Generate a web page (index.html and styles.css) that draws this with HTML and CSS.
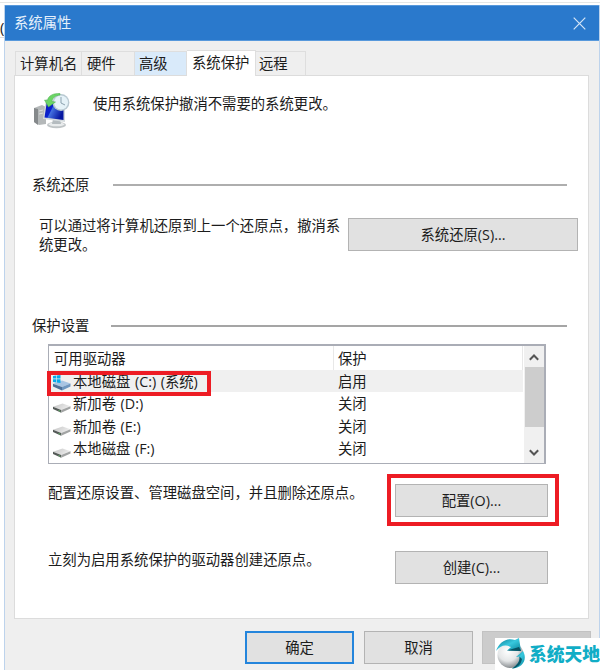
FILE: index.html
```html
<!DOCTYPE html>
<html lang="zh-CN">
<head>
<meta charset="utf-8">
<title>系统属性</title>
<link rel="stylesheet" href="styles.css">
</head>
<body>
<svg width="0" height="0" class="defs" aria-hidden="true">
  <defs>
    <linearGradient id="gray" x1="0" y1="0" x2="1" y2="0.4"><stop offset="0" stop-color="#c4c4c4"/><stop offset="1" stop-color="#ececec"/></linearGradient>
    <linearGradient id="screen" x1="0" y1="0" x2="1" y2="0.5"><stop offset="0" stop-color="#0714b4"/><stop offset=".45" stop-color="#0a22cf"/><stop offset=".5" stop-color="#4370e0"/><stop offset="1" stop-color="#0616a0"/></linearGradient>
    <radialGradient id="ball" cx=".4" cy=".35" r=".7"><stop offset="0" stop-color="#fff"/><stop offset=".55" stop-color="#e4e6e7"/><stop offset="1" stop-color="#777c80"/></radialGradient>
    <linearGradient id="teal" x1="0" y1="0" x2="1" y2="1"><stop offset="0" stop-color="#056f88"/><stop offset=".5" stop-color="#38c8de"/><stop offset="1" stop-color="#07839b"/></linearGradient>
    <symbol id="drive" viewBox="0 0 18 11">
      <path d="M0 4.800 9.500 1.500 17.500 4.300 8.200 8Z" fill="url(#gray)"/>
      <path d="M0 4.800 8.200 8V10.700L0 7.100Z" fill="#555a58"/>
      <path d="M8.200 8 17.500 4.300V6.500L8.200 10.700Z" fill="#a2a4a4"/>
      <path d="M5.500 8.500 7.300 9.300" stroke="#62c86b" stroke-width=".8"/>
    </symbol>
  </defs>
</svg>
<div class="backdrop">(</div>
<main class="window">
  <header class="titlebar">
    <span>系统属性</span>
    <svg class="close" viewBox="0 0 13 13"><path d="M.7.7 12.3 12.3M12.3.7.7 12.3" stroke="#d5e6f7" stroke-width="1.2"/></svg>
  </header>
  <nav class="tabs">
    <span class="tab tab-name">计算机名</span>
    <span class="tab tab-hw">硬件</span>
    <span class="tab tab-adv">高级</span>
    <span class="tab tab-active">系统保护</span>
    <span class="tab tab-remote">远程</span>
  </nav>
  <section class="panel">
    <div class="intro">
      <svg class="intro-icon" viewBox="0 0 36 36">
        <path d="M0 15 8 12 12 14V31L5 32 0 29Z" fill="#b4b8b9"/><path d="M0 15 4 16V32L0 29Z" fill="#85898b"/><path d="M5 18 9 17M5 21 9 20" stroke="#ddd"/>
        <ellipse cx="22.500" cy="32" rx="9.500" ry="3.200" fill="#bfc4c6"/><ellipse cx="22.500" cy="31.300" rx="8" ry="2" fill="#e9eced"/>
        <path d="M19 26H26L27 31H18Z" fill="#b5bcc0"/>
        <path d="M12 6 31 11 31 29 9 26Z" fill="#d4dadd"/><path d="M13 8 29.500 13 29.500 27 10.500 24.500Z" fill="url(#screen)"/>
        <circle cx="27" cy="9.500" r="8.400" fill="#b9c9d2"/><circle cx="27" cy="9.500" r="7" fill="#e5f2f8"/>
        <path d="M27 4V10L31 12" fill="none" stroke="#8ba1ae" stroke-width="1"/>
        <path d="M26 .5C19 0 14 3 13.500 7.500L10.500 7 14.500 14 21.500 9 18 8.500C18.500 5 21 2.500 26 2Z" fill="#6bd565" stroke="#45ac49" stroke-width=".5"/>
      </svg>
      <span>使用系统保护撤消不需要的系统更改。</span>
    </div>
    <div class="section section-restore"><span>系统还原</span><i></i></div>
    <div class="restore">
      <p>可以通过将计算机还原到上一个还原点，撤消系统更改。</p>
      <button class="btn btn-restore">系统还原(S)...</button>
    </div>
    <div class="section section-protect"><span>保护设置</span><i></i></div>
    <div class="list">
      <div class="rows">
        <div class="row head"><span class="name">可用驱动器</span><span>保护</span></div>
        <div class="row selected"><span class="name"><svg class="drive" viewBox="0 0 18 16">
          <path d="M0 8.800 9 5.500 17.500 8.500 9 12Z" fill="#a9c5e3"/><path d="M0 8.800 9 12V15.500L0 11.500Z" fill="#4c6f98"/><path d="M9 12 17.500 8.500V11.500L9 15.500Z" fill="#6f96bf"/>
          <path d="M0 1 3.200.5V3.600H0ZM3.800.4 7.500 0V3.600H3.800ZM0 4.200H3.200V7.400L0 7ZM3.800 4.200H7.500V8L3.800 7.500Z" fill="#08a9ea"/></svg>本地磁盘 (C:) (系统)</span><span>启用</span><em class="mark mark-drive"></em></div>
        <div class="row"><span class="name"><svg class="drive plain"><use href="#drive"/></svg>新加卷 (D:)</span><span>关闭</span></div>
        <div class="row"><span class="name"><svg class="drive plain"><use href="#drive"/></svg>新加卷 (E:)</span><span>关闭</span></div>
        <div class="row"><span class="name"><svg class="drive plain"><use href="#drive"/></svg>本地磁盘 (F:)</span><span>关闭</span></div>
      </div>
      <div class="scroll">
        <svg viewBox="0 0 10 7"><path d="M.8 5.800 5 1.500 9.200 5.800" fill="none" stroke="#555" stroke-width="2"/></svg>
        <div class="thumb"></div>
        <svg class="down" viewBox="0 0 10 7"><path d="M.8 1.200 5 5.500 9.200 1.200" fill="none" stroke="#555" stroke-width="2"/></svg>
      </div>
    </div>
    <div class="action"><span>配置还原设置、管理磁盘空间，并且删除还原点。</span><button class="btn">配置(O)...<em class="mark mark-config"></em></button></div>
    <div class="action action-create"><span>立刻为启用系统保护的驱动器创建还原点。</span><button class="btn">创建(C)...</button></div>
  </section>
  <footer class="footer">
    <button class="btn ok">确定</button>
    <button class="btn">取消</button>
    <button class="btn disabled"></button>
  </footer>
</main>
<div class="watermark">
  <svg viewBox="0 0 31 31">
    <circle cx="15.500" cy="17" r="13" fill="url(#ball)"/>
    <path d="M1 13C4 4 12-1 20 2L24 0 26 13 12 12.500 16 9C10 6 5 8 1 13Z" fill="url(#teal)"/>
    <path d="M12 12.500 26 13 24 9Z" fill="#075465"/>
    <path d="M28 13C33 22 27 30 17 30.500 22 27 25 24 24.500 18.500L21 19Z" fill="url(#teal)"/>
    <path d="M24.500 18.500C25 24 22 27 17 30.500 22 30 26 27 27 21Z" fill="#075869"/>
  </svg>
  <span>系统天地</span>
</div>
</body>
</html>
```
FILE: styles.css
```css
* { box-sizing: border-box; }
body {
  margin: 0;
  width: 600px;
  height: 670px;
  padding: 5px 0 0 4px;
  position: relative;
  overflow: hidden;
  background: linear-gradient(#fff 2px, #e5e7e6 2px, #e5e7e6 3px, #fff 3px);
  color: #1c1c1c;
  font: 14.35px/22px "Open Sans", "Noto Sans CJK SC", sans-serif;
}
.defs { position: absolute; }
.backdrop { position: absolute; left: 0; top: 16px; width: 4px; height: 22px; overflow: hidden; border-bottom: 1px solid #ddd; font-size: 15px; }
.window { position: relative; height: 665px; background: #efefef; border: solid #bdd3ec; border-width: 0 1px; }
.titlebar { display: flex; justify-content: space-between; align-items: center; height: 36px; padding: 0 13px 0 9px; background: #2a79cc; border: 1px solid #5899dc; border-width: 1px 0; color: #e6f0fb; }
.close { width: 13px; height: 13px; }
.tabs { display: flex; align-items: flex-end; height: 34px; padding-left: 10px; }
.tab { height: 24px; border: 1px solid #dedede; border-width: 1px 1px 0 0; padding-left: 4px; white-space: nowrap; line-height: 23px; }
.tab-name { width: 67px; border-left-width: 1px; padding-left: 4px; }
.tab-hw { width: 53px; padding-left: 5px; }
.tab-adv { width: 52px; background: #d9eafa; }
.tab-active { width: 69px; height: 26px; margin-bottom: -1px; background: #fff; padding-left: 5px; position: relative; }
.tab-remote { width: 50px; padding-left: 3px; }
.panel { width: 575px; height: 544px; margin-left: 9px; background: #fff; border: 1px solid #dcdcdc; }
.intro { display: flex; height: 93px; padding: 17px 0 0 19px; }
.intro-icon { width: 36px; height: 36px; margin-right: 23px; }
.section { display: flex; align-items: center; height: 32px; padding-left: 17px; }
.section span { width: 81px; }
.section i { width: 454px; height: 2px; background: #aeaeae; }
.section-protect span { width: 79px; }
.section-protect i { width: 456px; height: 2px; background: #a5a5a5; }
.restore { display: flex; height: 109px; padding: 17px 0 0 24px; }
.restore p { width: 303px; margin: -2px 6px 0 0; line-height: 19px; }
.btn { position: relative; width: 153px; height: 33px; padding: 0; border: 1px solid #b3b3b3; background: #e1e1e1; color: inherit; font: inherit; }
.btn-restore { width: 230px; }
.list { display: flex; justify-content: space-between; width: 498px; height: 120px; margin: 2px 0 0 33px; border: 2px solid #aaadb6; border-width: 2px 2px 1px 1px; }
.rows { width: 474px; }
.row { position: relative; display: flex; height: 22.4px; line-height: 23px; }
.head { height: 24px; line-height: 26px; border-right: 1px solid #e8e8e8; }
.name { display: flex; width: 289px; white-space: pre; padding-left: 4px; word-spacing: .8px; }
.head .name { width: 285px; margin-right: 4px; padding-left: 5px; border-right: 1px solid #e8e8e8; }
.selected { background: #f0f0f0; }
.drive { width: 18px; height: 16px; margin: 5px 2px 0 0; flex: none; }
.plain { height: 11px; margin-top: 10px; }
.mark { position: absolute; border: 4px solid #ed1c24; }
.mark-drive { left: -2px; top: 1px; width: 164px; height: 25px; }
.mark-config { left: -9px; top: -11px; width: 172px; height: 52px; }
.scroll { display: flex; flex-direction: column; align-items: center; width: 20px; background: #f0f0f0; }
.scroll svg { width: 10px; height: 7px; margin: 8px 0 6px; }
.scroll .down { margin-top: 22px; }
.thumb { width: 19px; height: 60px; background: #cdcdcd; }
.action { display: flex; width: 533px; height: 67px; margin-top: 20px; padding-left: 33px; justify-content: space-between; }
.action span { margin-top: -2px; }
.action-create { margin-top: 0; }
.footer { display: flex; gap: 10px; padding: 12px 0 0 240px; }
.footer .btn { width: 109px; }
.footer .ok { border: 2px solid #2485dc; }
.footer .disabled { background: #ccc; border-color: #c2c2c2; margin-left: -1px; }
.watermark { position: absolute; left: 495px; top: 638px; width: 105px; height: 32px; display: flex; background: #fff; color: #10adc6; font: 900 17.8px/31px "Noto Sans CJK SC", sans-serif; white-space: nowrap; }
.watermark svg { width: 31px; height: 31px; flex: none; margin-right: 3px; }
```
